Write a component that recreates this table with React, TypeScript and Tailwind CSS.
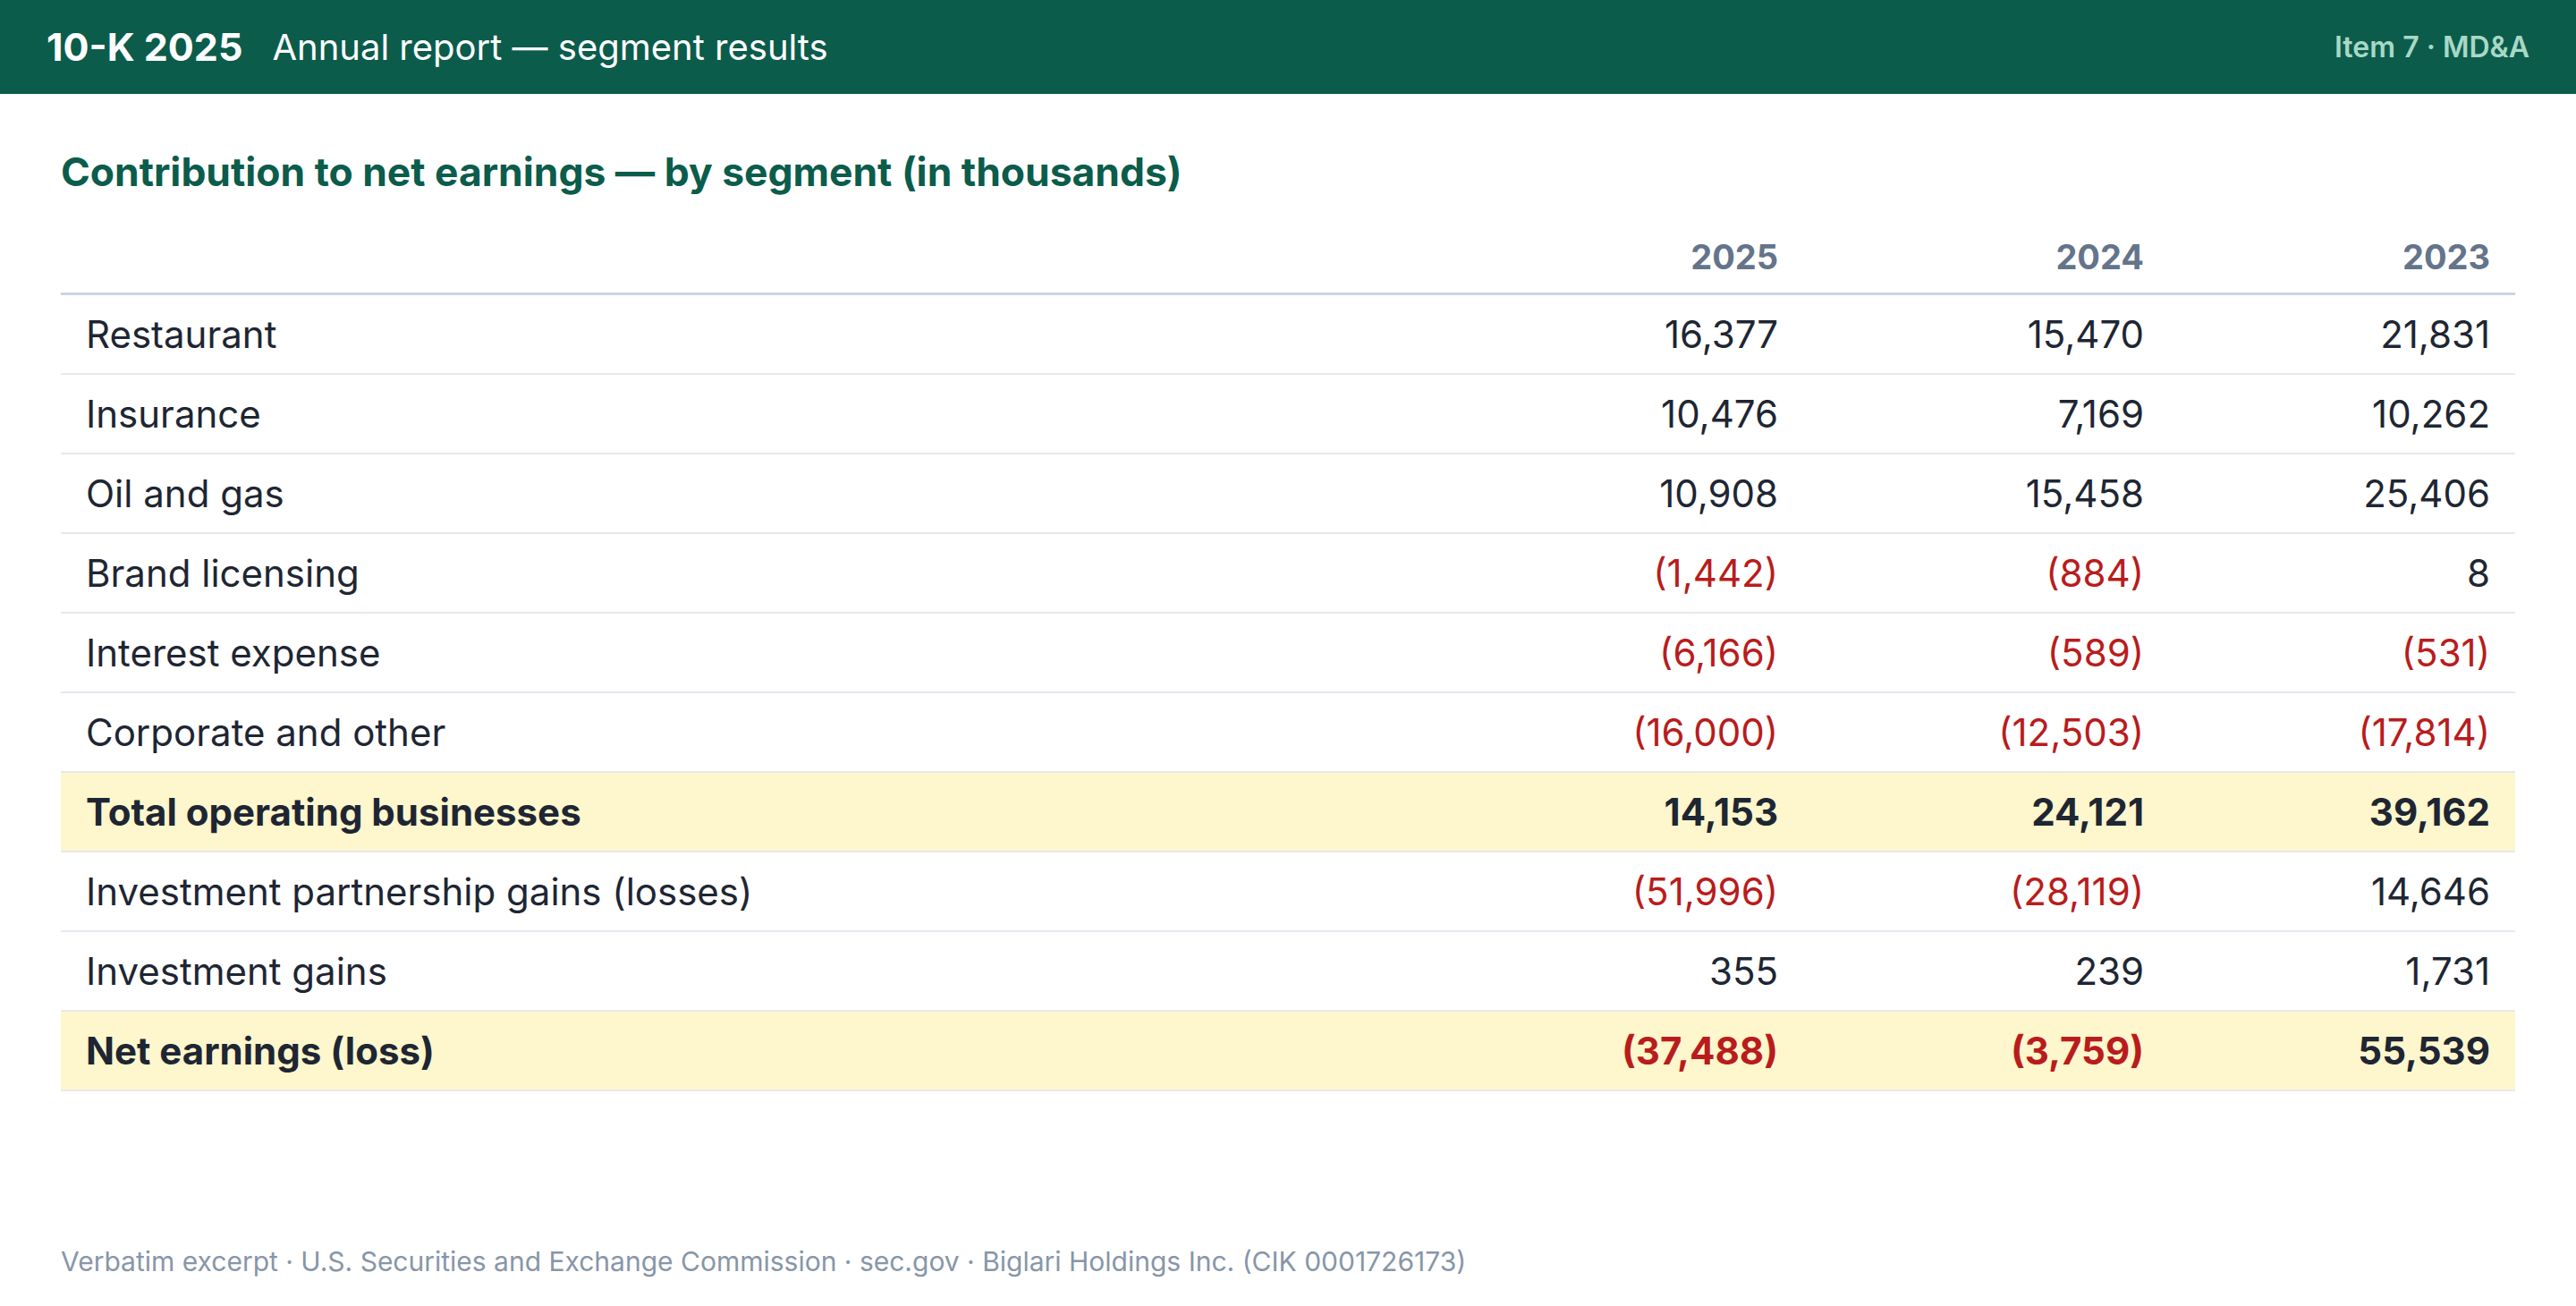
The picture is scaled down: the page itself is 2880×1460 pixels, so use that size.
import React from "react";

type Row = {
  label: string;
  values: string[];
  strong?: boolean;
};

const rows: Row[] = [
  { label: "Restaurant", values: ["16,377", "15,470", "21,831"] },
  { label: "Insurance", values: ["10,476", "7,169", "10,262"] },
  { label: "Oil and gas", values: ["10,908", "15,458", "25,406"] },
  { label: "Brand licensing", values: ["(1,442)", "(884)", "8"] },
  { label: "Interest expense", values: ["(6,166)", "(589)", "(531)"] },
  { label: "Corporate and other", values: ["(16,000)", "(12,503)", "(17,814)"] },
  { label: "Total operating businesses", values: ["14,153", "24,121", "39,162"], strong: true },
  { label: "Investment partnership gains (losses)", values: ["(51,996)", "(28,119)", "14,646"] },
  { label: "Investment gains", values: ["355", "239", "1,731"] },
  { label: "Net earnings (loss)", values: ["(37,488)", "(3,759)", "55,539"], strong: true },
];

const years = ["2025", "2024", "2023"];

export default function App() {
  return (
    <div
      className="min-h-screen flex flex-col bg-white text-[#1e293b]"
      style={{ fontFamily: "Inter, 'Noto Sans', 'Liberation Sans', sans-serif" }}
    >
      <header className="h-[105px] bg-[#0b5c4b] px-[52px] flex items-center justify-between">
        <div className="flex items-center gap-[33px] text-white leading-none">
          <span className="font-bold text-[43px]">10-K 2025</span>
          <span className="font-normal text-[40px]">Annual report — segment results</span>
        </div>
        <div className="text-[32px] font-semibold text-[#a8d8c6] leading-none">Item 7 · MD&amp;A</div>
      </header>

      <main className="px-[68px]">
        <h1 className="mt-[60px] mb-[40px] text-[44.4px] leading-[54px] font-bold text-[#0b5c4b]">
          Contribution to net earnings — by segment (in thousands)
        </h1>

        <table className="w-full table-fixed border-collapse">
          <colgroup>
            <col />
            <col className="w-[409px]" />
            <col className="w-[409px]" />
            <col className="w-[387px]" />
          </colgroup>
          <thead>
            <tr className="border-b-[3px] border-[#cbd5e1]">
              <th className="px-[28px] pb-[12px]" />
              {years.map((y) => (
                <th
                  key={y}
                  className="px-[28px] pb-[12px] text-right text-[38px] leading-[56px] font-bold text-[#64748b]"
                >
                  {y}
                </th>
              ))}
            </tr>
          </thead>
          <tbody>
            {rows.map((r) => (
              <tr
                key={r.label}
                className={`border-b-2 border-[#e5e9ee] ${r.strong ? "bg-[#fef6cc]" : ""}`}
              >
                <td
                  className={`px-[28px] py-[15px] text-left text-[42px] leading-[57px] text-[#1e2633] ${
                    r.strong ? "font-bold" : "font-normal"
                  }`}
                >
                  {r.label}
                </td>
                {r.values.map((v, i) => {
                  const neg = v.startsWith("(");
                  return (
                    <td
                      key={i}
                      className={`px-[28px] py-[15px] text-right text-[42px] leading-[57px] ${
                        r.strong ? "font-bold" : "font-normal"
                      } ${neg ? "text-[#b91c1c]" : "text-[#1e2633]"}`}
                    >
                      {v}
                    </td>
                  );
                })}
              </tr>
            ))}
          </tbody>
        </table>
      </main>

      <footer className="mt-auto px-[68px] pb-[27px] text-[30px] leading-[45px] text-[#8796a8]">
        Verbatim excerpt · U.S. Securities and Exchange Commission · sec.gov · Biglari Holdings Inc. (CIK 0001726173)
      </footer>
    </div>
  );
}
